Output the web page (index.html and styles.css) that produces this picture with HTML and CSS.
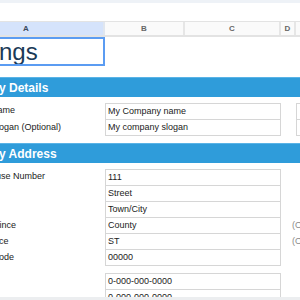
FILE: index.html
```
<!DOCTYPE html>
<html>
<head>
	<meta charset="utf-8">
	<title>Settings</title>
	<link rel="stylesheet" href="styles.css">
</head>
<body>
<div class="topbar"></div>
<div class="sheet">
	<div class="colheads">
		<div class="ch sel">A</div>
		<div class="ch">B</div>
		<div class="ch">C</div>
		<div class="ch">D</div>
		<div class="ch"></div>
	</div>

	<div class="title-row">
		<div class="title-cell">Settings</div>
	</div>

	<div class="band">Company Details</div>
	<div class="group">
		<div class="row first"><div class="label">Company Name</div><div class="field">My Company name</div><div class="spacer"></div><div class="extra"></div></div>
		<div class="row"><div class="label">Company Slogan (Optional)</div><div class="field">My company slogan</div><div class="spacer"></div><div class="extra"></div></div>
	</div>

	<div class="band">Company Address</div>
	<div class="group">
		<div class="row first"><div class="label">Building/House Number</div><div class="field">111</div></div>
		<div class="row"><div class="label"></div><div class="field">Street</div></div>
		<div class="row"><div class="label"></div><div class="field">Town/City</div></div>
		<div class="row"><div class="label">County/Province</div><div class="field">County</div><div class="note">(Optional)</div></div>
		<div class="row"><div class="label">State/Province</div><div class="field">ST</div><div class="note">(Optional)</div></div>
		<div class="row"><div class="label">Zip/Postal Code</div><div class="field">00000</div></div>
	</div>

	<div class="group phones">
		<div class="row first"><div class="label"></div><div class="field">0-000-000-0000</div></div>
		<div class="row"><div class="label"></div><div class="field">0-000-000-0000</div></div>
	</div>
</div>
<div class="bottombar"></div>
</body>
</html>
```

FILE: styles.css
```
html, body { margin: 0; height: 300px; overflow: hidden; background: #fff; }
body {
	display: flex;
	flex-direction: column;
	font-family: "Liberation Sans", Arial, sans-serif;
}
.topbar { height: 3px; background: #eef2f7; flex: none; }
.sheet {
	flex: 1;
	margin-left: -51px;
	padding-top: 18px;
	overflow: hidden;
}
.colheads {
	display: grid;
	grid-template-columns: 156px 80px 96px 15px 80px;
	height: 16px;
	box-sizing: border-box;
	border-top: 1px solid #e3e3e3;
	border-bottom: 2px solid #e3e3e3;
	background: #fafafa;
}
.ch {
	border-right: 2px solid #e6e6e6;
	font-size: 8px;
	font-weight: bold;
	color: #666;
	text-align: center;
	line-height: 13px;
}
.ch.sel { background: #d5e3fb; color: #3c4a5c; border-right-color: #e0e6ef; }

.title-row { height: 29px; margin-bottom: 11px; }
.title-cell {
	width: 156px;
	height: 29px;
	box-sizing: border-box;
	border: 2px solid #5b9cf2;
	font-size: 24px;
	line-height: 25px;
	color: #1b3a58;
	white-space: nowrap;
	overflow: hidden;
}

.band {
	height: 20px;
	line-height: 20px;
	background: #2f9cda;
	color: #fff;
	font-size: 12px;
	font-weight: bold;
	padding-left: 2px;
	border-top: 1px solid #5ab3e6;
	box-sizing: border-box;
}
.group { padding: 6px 0 7px 0; }
.phones { padding-top: 0; }

.row {
	display: grid;
	grid-template-columns: 156px 176px 15px 80px;
	height: 16px;
	font-size: 9px;
	line-height: 15px;
}
.row.first { height: 17px; }
.label { color: #222; padding-left: 1px; white-space: nowrap; }
.field, .extra {
	border: 1px solid #d6d6d6;
	border-top: 0;
	padding-left: 2px;
	color: #222;
	white-space: nowrap;
}
.row.first .field, .row.first .extra { border-top: 1px solid #d6d6d6; }
.note {
	grid-column: 3 / 5;
	padding-left: 11px;
	color: #8a8a8a;
	white-space: nowrap;
}
.bottombar { height: 3px; background: #eceef0; flex: none; }
```
